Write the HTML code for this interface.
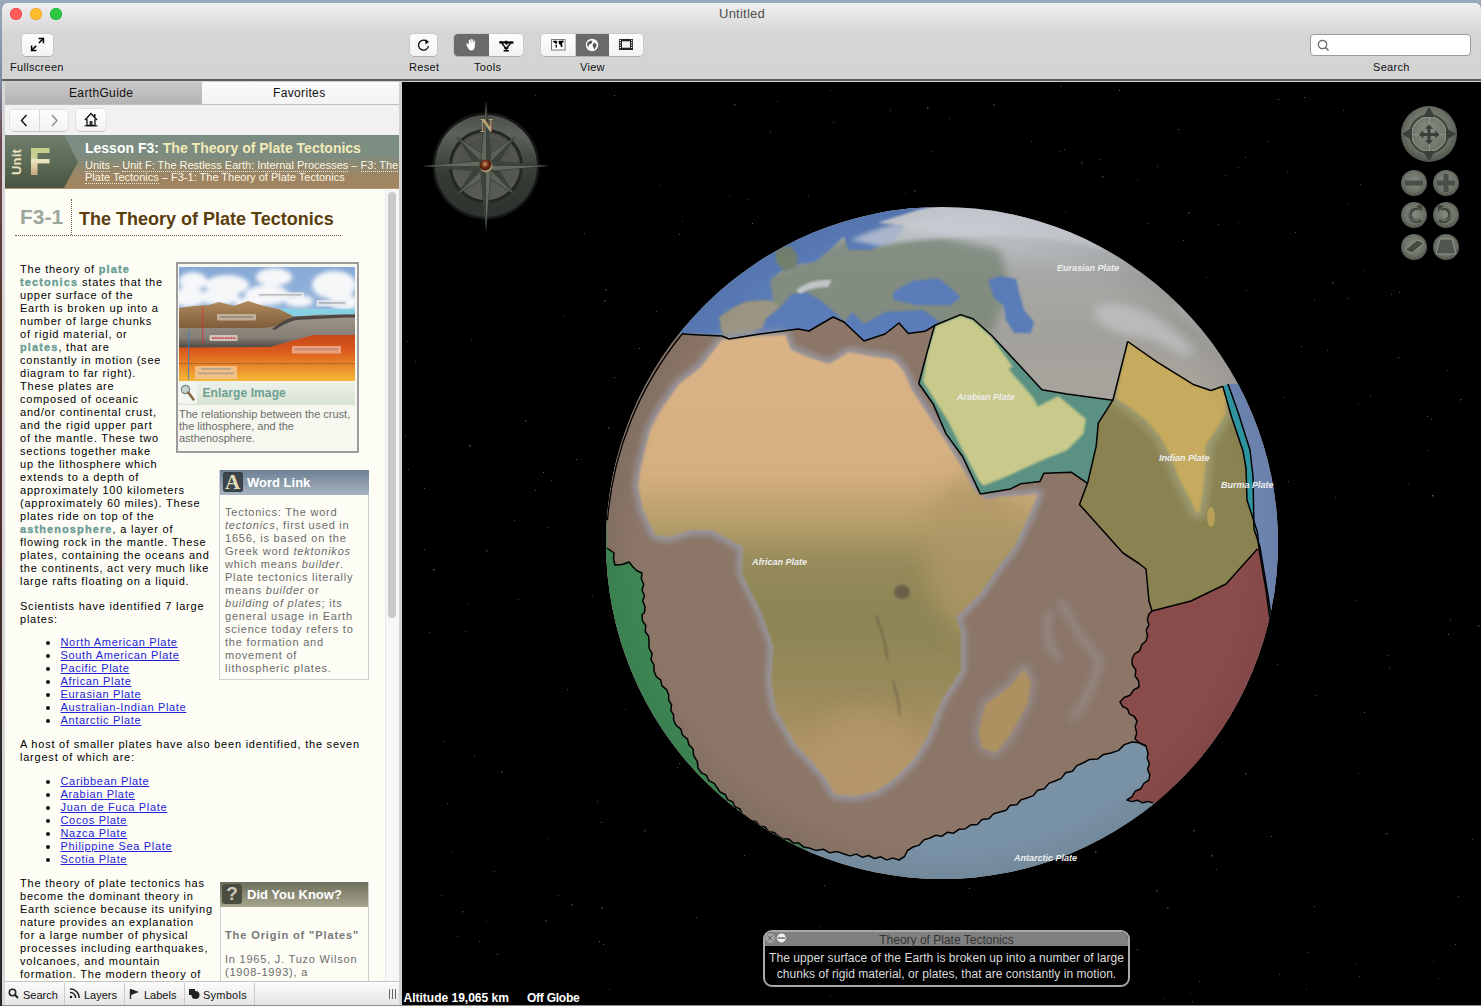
<!DOCTYPE html>
<html><head><meta charset="utf-8">
<style>
*{margin:0;padding:0;box-sizing:border-box}
html,body{width:1481px;height:1006px;overflow:hidden;background:#000;font-family:"Liberation Sans",sans-serif}
.a{position:absolute}
.light{width:12px;height:12px;border-radius:50%}
.btn{position:absolute;background:linear-gradient(180deg,#fdfdfd,#f3f3f3);border-radius:4px;box-shadow:0 0.5px 0.5px rgba(0,0,0,.25),0 0 0 0.5px rgba(0,0,0,.12)}
.lbl{position:absolute;font-size:11px;color:#111;white-space:nowrap;letter-spacing:0.3px;line-height:13px}
.t{position:absolute;white-space:nowrap;font-size:11px;line-height:13px;letter-spacing:0.78px;color:#000}
.b{font-weight:bold;color:#6a9d94;letter-spacing:1.1px;-webkit-text-stroke:0.35px #6a9d94}
.lk{color:#2323d6;text-decoration:underline;letter-spacing:0.66px}
.bul{position:absolute;width:4px;height:4px;border-radius:50%;background:#111}
</style></head>
<body>
<!-- desktop -->
<div class="a" style="left:0;top:0;width:1481px;height:1006px;background:#98a9bb"></div>
<div class="a" style="left:0;top:0;width:3px;height:1006px;background:linear-gradient(180deg,#98a9bb 0%,#7f8ca3 8%,#6a4a50 14%,#5e342e 30%,#4a2e2a 55%,#2e2a2a 75%,#262626 100%)"></div>
<!-- window bg -->
<div class="a" style="left:2px;top:3px;width:1479px;height:1003px;background:#000;border-radius:5px 5px 0 0;overflow:hidden">
  <div class="a" style="left:0;top:0;width:1479px;height:76px;background:linear-gradient(180deg,#eeeeee 0%,#e4e4e4 18%,#d6d6d6 40%,#d3d3d3 100%)"></div>
</div>
<div class="a" style="left:2px;top:79px;width:1479px;height:1.5px;background:#5c5c5c"></div>
<div class="a" style="left:2px;top:80.5px;width:1479px;height:1.5px;background:#cfcfcf"></div>

<!-- traffic lights -->
<div class="a light" style="left:10px;top:8px;background:#fc5b57;box-shadow:inset 0 0 0 0.5px #e2463f"></div>
<div class="a light" style="left:30px;top:8px;background:#fdbb2e;box-shadow:inset 0 0 0 0.5px #dfa023"></div>
<div class="a light" style="left:50px;top:8px;background:#2ac840;box-shadow:inset 0 0 0 0.5px #1fab2f"></div>
<div class="a" style="left:719px;top:6px;font-size:13px;line-height:16px;color:#4d4d4d;letter-spacing:0.25px">Untitled</div>

<!-- toolbar buttons -->
<div class="btn" style="left:22px;top:34px;width:31px;height:22px">
  <svg class="a" style="left:0;top:0" width="31" height="22" viewBox="0 0 31 22"><g stroke="#000" stroke-width="1.5" fill="none" stroke-linecap="square"><path d="M17.3 4.5 H21.4 V8.6"/><path d="M21 4.9 L17.4 8.5"/><path d="M9.6 12.3 V16.4 H13.7"/><path d="M10 16 L13.6 12.4"/></g></svg>
</div>
<div class="lbl" style="left:10px;top:61px">Fullscreen</div>

<div class="btn" style="left:410px;top:34px;width:27px;height:22px">
  <svg class="a" style="left:0;top:0" width="27" height="22" viewBox="0 0 27 22"><path d="M17.6 8.2 A5 5 0 1 0 18.5 12" stroke="#111" stroke-width="1.3" fill="none"/><path d="M15.2 5.2 L19 7.8 L15.6 10.4 Z" fill="#111"/></svg>
</div>
<div class="lbl" style="left:409px;top:61px">Reset</div>

<div class="btn" style="left:454px;top:34px;width:69px;height:22px;overflow:hidden">
  <div class="a" style="left:0;top:0;width:35px;height:22px;background:#6a6a6a"></div>
  <svg class="a" style="left:0;top:0" width="69" height="22" viewBox="0 0 69 22">
    <path d="M13.5 13 C12.5 11 12 9.5 12.8 9.2 C13.6 9 14 10.5 14.6 11 L14.8 6.5 C14.9 5.6 16 5.6 16.1 6.5 L16.3 10 L16.4 5.4 C16.5 4.6 17.6 4.6 17.7 5.4 L17.9 10 L18.2 5.8 C18.3 5 19.4 5 19.4 5.8 L19.5 10.4 L20.1 7.2 C20.3 6.5 21.3 6.6 21.2 7.4 L20.8 12.5 C20.5 15 19.5 16.5 17 16.5 C15.5 16.5 14.4 15 13.5 13 Z" fill="#fff"/>
    <path d="M45 7.5 Q47 6.5 50 7.5 L52 6.5 L54 7.5 Q57 6.8 59.5 7.5 V9.5 Q56 9.8 54 9.5 L52.5 11 L51 9.5 Q48 9.8 45.5 9.5 Z" fill="#000"/><path d="M48 9.5 L52 14.5 L56.5 9.5" stroke="#000" stroke-width="1.4" fill="none"/><path d="M50 17 L54.5 13.5 M50 13.5 L54.5 17 M49.5 17 H55" stroke="#000" stroke-width="1.2"/>
  </svg>
</div>
<div class="lbl" style="left:474px;top:61px">Tools</div>

<div class="btn" style="left:541px;top:34px;width:102px;height:22px;overflow:hidden">
  <div class="a" style="left:34px;top:0;width:34px;height:22px;background:#6a6a6a"></div>
  <div class="a" style="left:33.5px;top:0;width:0.5px;height:22px;background:#ccc"></div>
  <svg class="a" style="left:0;top:0" width="102" height="22" viewBox="0 0 102 22">
    <rect x="10.5" y="5.5" width="13.5" height="10.5" fill="#fff" stroke="#7a7a7a" stroke-width="1"/>
    <path d="M11.5 7 L15 6.5 L16.5 8 L15.5 10 L14.5 9.5 L13 8.5 Z M14.5 10.5 L16 11 L15.5 14.5 L14.5 13 Z M17.5 7 L22 6.5 L23 8 L21 9 L21.5 12.5 L20 13.5 L19.5 11 L18 10 Z" fill="#000"/>
    <circle cx="51" cy="11" r="6.2" fill="#fafafa"/>
    <path d="M49.5 6.5 L51.5 7 L50.5 9.5 L48 10.5 L47.5 13 L46 11.5 L46.5 8.5 Z M53 8.5 L55.5 10 L55 13 L53.5 15.5 L52.5 13.5 L51.5 11.5 Z" fill="#555"/>
    <rect x="78" y="5" width="14" height="11" fill="#222"/>
    <rect x="81" y="7.3" width="8" height="6.4" fill="#f2f2f2"/>
    <g fill="#fff"><rect x="78.7" y="5.8" width="1.3" height="1.1"/><rect x="78.7" y="8.2" width="1.3" height="1.1"/><rect x="78.7" y="10.6" width="1.3" height="1.1"/><rect x="78.7" y="13" width="1.3" height="1.1"/><rect x="90" y="5.8" width="1.3" height="1.1"/><rect x="90" y="8.2" width="1.3" height="1.1"/><rect x="90" y="10.6" width="1.3" height="1.1"/><rect x="90" y="13" width="1.3" height="1.1"/></g>
  </svg>
</div>
<div class="lbl" style="left:580px;top:61px">View</div>

<div class="a" style="left:1310px;top:34px;width:161px;height:22px;background:#fff;border:1px solid #9a9a9a;border-radius:4px"></div>
<svg class="a" style="left:1316px;top:38px" width="16" height="14" viewBox="0 0 16 14"><circle cx="6.5" cy="6.5" r="4.2" stroke="#666" stroke-width="1.2" fill="none"/><path d="M9.5 9.5 L12.5 12.5" stroke="#666" stroke-width="1.4"/></svg>
<div class="lbl" style="left:1373px;top:61px">Search</div>

<!-- LEFT PANEL -->
<div class="a" style="left:2px;top:82px;width:3px;height:923px;background:#d6d6d6"></div>
<div class="a" style="left:399px;top:82px;width:3px;height:923px;background:#d3d3d3"></div>
<!-- tabs -->
<div class="a" style="left:5px;top:82px;width:197px;height:22px;background:linear-gradient(180deg,#c9c9c9,#b3b3b3)"></div>
<div class="a" style="left:202px;top:82px;width:197px;height:22px;background:linear-gradient(180deg,#fafafa,#f3f3f3)"></div>
<div class="a" style="left:5px;top:104px;width:394px;height:1px;background:#bdbdbd"></div>
<div class="lbl" style="left:69px;top:86px;font-size:12px;line-height:14px;letter-spacing:0.35px">EarthGuide</div>
<div class="lbl" style="left:273px;top:86px;font-size:12px;line-height:14px;letter-spacing:0.35px">Favorites</div>
<!-- nav -->
<div class="a" style="left:5px;top:105px;width:394px;height:30px;background:#f1f1f1"></div>
<div class="btn" style="left:9.5px;top:109.5px;width:58.5px;height:21px">
  <div class="a" style="left:29px;top:0;width:0.7px;height:21px;background:#d8d8d8"></div>
  <svg class="a" style="left:0;top:0" width="59" height="21" viewBox="0 0 59 21"><path d="M16.5 5 L11.5 10.5 L16.5 16" stroke="#111" stroke-width="1.4" fill="none"/><path d="M42 5 L47 10.5 L42 16" stroke="#888" stroke-width="1.3" fill="none"/></svg>
</div>
<div class="btn" style="left:76px;top:109px;width:30px;height:22px">
  <svg class="a" style="left:0;top:0" width="30" height="22" viewBox="0 0 30 22"><path d="M9 11 L15 4.5 L21 11" stroke="#111" stroke-width="1.4" fill="none"/><path d="M11 10 V16.5 H19 V10" stroke="#111" stroke-width="1.3" fill="none"/><rect x="13.5" y="12" width="3" height="4.5" fill="#333"/><path d="M8.5 16.8 H21.5" stroke="#111" stroke-width="1"/><rect x="18" y="5" width="1.5" height="3" fill="#111"/></svg>
</div>
<!-- header -->
<div class="a" style="left:5px;top:135px;width:394px;height:54px;background:linear-gradient(180deg,#7b8e84 0%,#7d8c80 38%,#908870 58%,#a08562 80%,#a18561 100%)"></div>
<div class="a" style="left:5px;top:187.5px;width:394px;height:1.5px;background:#b39a74"></div>
<svg class="a" style="left:5px;top:135px" width="75" height="53" viewBox="0 0 75 53">
  <defs><linearGradient id="ug" x1="0" y1="0" x2="0" y2="1"><stop offset="0" stop-color="#6f7d6b"/><stop offset="0.55" stop-color="#5a6a55"/><stop offset="1" stop-color="#46533f"/></linearGradient></defs>
  <path d="M0 0 H59 L73 27 L59 53 H0 Z" fill="url(#ug)"/>
</svg>
<div class="a" style="left:-1px;top:155px;width:36px;height:14px;transform:rotate(-90deg);font-size:13px;font-weight:bold;color:#ece3bd;line-height:14px;text-align:center;letter-spacing:0.2px">Unit</div>
<svg class="a" style="left:31px;top:148px" width="19" height="28" viewBox="0 0 19 28">
  <defs><linearGradient id="fg" x1="0" y1="0" x2="0" y2="1"><stop offset="0" stop-color="#c6cf8c"/><stop offset="0.35" stop-color="#c9cd94"/><stop offset="0.45" stop-color="#efe7c2"/><stop offset="1" stop-color="#c4a77a"/></linearGradient></defs>
  <path d="M0 0 H18.5 V5 H6.5 V11 H18.5 V15.5 H6.5 V27 H0 Z" fill="url(#fg)"/>
</svg>
<div class="a" style="left:85px;top:140px;font-size:14px;line-height:16px;font-weight:bold;color:#fff;white-space:nowrap">Lesson F3: <span style="color:#f3eab8">The Theory of Plate Tectonics</span></div>
<div class="a" style="left:85px;top:159px;font-size:11px;line-height:12px;color:#fbf6e2;white-space:nowrap"><span style="border-bottom:1px dotted #f0e8d0">Units</span> – <span style="border-bottom:1px dotted #f0e8d0">Unit F: The Restless Earth: Internal Processes</span> – <span style="border-bottom:1px dotted #f0e8d0">F3: The</span></div>
<div class="a" style="left:85px;top:171px;font-size:11px;line-height:12px;color:#fbf6e2;white-space:nowrap"><span style="border-bottom:1px dotted #f0e8d0">Plate Tectonics</span> – F3-1: The Theory of Plate Tectonics</div>

<!-- content -->
<div class="a" style="left:5px;top:189px;width:379.5px;height:792.5px;background:#fdfdf6;overflow:hidden" id="content"><div class="a" style="left:-5px;top:-189px;width:1481px;height:1006px">
<div class="a" style="left:20px;top:205px;font-size:21px;line-height:24px;font-weight:bold;color:#9ba69d;white-space:nowrap">F3-1</div>
<div class="a" style="left:71px;top:199px;width:0;height:36px;border-left:1px dotted #6b5a3a"></div>
<div class="a" style="left:15px;top:235px;width:326px;height:0;border-top:1px dotted #6b5a3a"></div>
<div class="a" style="left:79px;top:208.5px;font-size:18px;line-height:21px;font-weight:bold;color:#5b3c0c;white-space:nowrap">The Theory of Plate Tectonics</div>

<!-- figure box -->
<div class="a" style="left:175.5px;top:261.5px;width:183px;height:191.5px;border:2px solid #9c9c9c;background:#f6f7ee"></div>
<svg class="a" style="left:179px;top:267px" width="176" height="114" viewBox="0 0 176 114">
  <defs>
    <linearGradient id="sky" x1="0" y1="0" x2="0" y2="1"><stop offset="0" stop-color="#86a9d6"/><stop offset="1" stop-color="#b9cde3"/></linearGradient>
    <linearGradient id="ast" x1="0" y1="0" x2="0" y2="1"><stop offset="0" stop-color="#c2461a"/><stop offset="0.35" stop-color="#d9581c"/><stop offset="0.7" stop-color="#e98a2a"/><stop offset="1" stop-color="#f4b839"/></linearGradient>
    <linearGradient id="crust" x1="0" y1="0" x2="0" y2="1"><stop offset="0" stop-color="#b08a5c"/><stop offset="1" stop-color="#7e5c3a"/></linearGradient>
    <linearGradient id="lith" x1="0" y1="0" x2="0" y2="1"><stop offset="0" stop-color="#9d978c"/><stop offset="0.7" stop-color="#847e74"/><stop offset="1" stop-color="#4e4944"/></linearGradient>
    <filter id="cb"><feGaussianBlur stdDeviation="2"/></filter>
  </defs>
  <rect width="176" height="114" fill="url(#sky)"/>
  <g fill="#f6f7f9" filter="url(#cb)">
    <ellipse cx="14" cy="14" rx="14" ry="9"/><ellipse cx="10" cy="30" rx="16" ry="10"/>
    <ellipse cx="48" cy="18" rx="22" ry="10"/><ellipse cx="40" cy="30" rx="20" ry="8"/>
    <ellipse cx="95" cy="10" rx="18" ry="9"/><ellipse cx="88" cy="28" rx="22" ry="10"/>
    <ellipse cx="155" cy="18" rx="22" ry="14"/><ellipse cx="165" cy="35" rx="14" ry="8"/>
    <ellipse cx="70" cy="36" rx="14" ry="6"/><ellipse cx="120" cy="34" rx="14" ry="6"/>
  </g>
  <rect y="66" width="176" height="48" fill="url(#ast)"/>
  <path d="M98 42 H176 V49 H98 Z" fill="#86d2e4"/>
  <path d="M0 41 L15 39 L30 38 L40 35 L55 39 L69 34 L85 39 L101 42.5 L113 48.6 L118 52 L95 61 L85 62 L0 62 Z" fill="url(#crust)"/>
  <path d="M0 61 L85 61 L95 59.5 L113 50 L140 47.5 L176 47.5 L176 68 L134 68 L91 80 L0 80.5 Z" fill="url(#lith)"/>
  <path d="M93 62 Q105 52 116 49.5 L165 47.5 L176 47.5 V50.5 L166 50.5 L117 53 Q106 56 96 63 Z" fill="#4f4842"/>
  <path d="M0 96.6 H176" stroke="#3a2a1a" stroke-width="0.6" stroke-dasharray="1.2 1.2"/>
  <rect x="78" y="25.5" width="47" height="5" rx="1" fill="#eef0f2" opacity="0.85"/>
  <rect x="137.5" y="33" width="31" height="6.5" rx="1" fill="#e6ebf0" opacity="0.85"/>
  <rect x="38" y="47" width="39" height="6.5" rx="1" fill="#c8b9a4" opacity="0.85"/>
  <rect x="30.5" y="68" width="28" height="6" rx="1" fill="#d8d0c8" opacity="0.85"/>
  <path d="M33 71 H57" stroke="#d03a3a" stroke-width="1.6" stroke-dasharray="2 0.6"/>
  <rect x="113" y="79" width="49" height="7.5" rx="1" fill="#f0b49a" opacity="0.8"/>
  <rect x="16" y="99" width="42" height="13" rx="1" fill="#f3c493" opacity="0.85"/>
  <path d="M23.7 40 V77" stroke="#d32f2f" stroke-width="0.8"/>
  <path d="M9.7 63 V113" stroke="#3a7fc0" stroke-width="0.9"/>
  <g fill="#333" opacity="0.55"><rect x="80" y="27" width="43" height="1.6" opacity="0.5"/><rect x="140" y="35" width="26" height="1.8" opacity="0.5"/><rect x="41" y="49.2" width="33" height="1.8" opacity="0.5"/><rect x="116" y="81.5" width="43" height="1.8" opacity="0.45"/><rect x="22" y="101" width="30" height="1.8" fill="#3a6aa8" opacity="0.6"/><rect x="19" y="105.5" width="36" height="1.8" fill="#3a6aa8" opacity="0.6"/></g>
</svg>
<div class="a" style="left:179px;top:381px;width:176px;height:24px;background:linear-gradient(180deg,#eef2ea,#d6e3d2)"></div>
<div class="a" style="left:179px;top:382px;width:18px;height:22px;background:#f3f6f0;border-radius:3px"></div>
<svg class="a" style="left:179px;top:383px" width="18" height="20" viewBox="0 0 18 20"><circle cx="6.5" cy="6.5" r="4.2" fill="#c9d4d2" stroke="#7a8c88" stroke-width="1.2"/><path d="M9.3 9.5 L14.5 16.5" stroke="#8a6a40" stroke-width="2.6" stroke-linecap="round"/></svg>
<div class="a" style="left:202.5px;top:386px;font-size:12px;line-height:14px;font-weight:bold;color:#6e9f95;white-space:nowrap;letter-spacing:0.1px">Enlarge Image</div>
<div class="a" style="left:179px;top:408px;font-size:11px;line-height:12px;color:#6d6d6d;white-space:nowrap">The relationship between the crust,<br>the lithosphere, and the<br>asthenosphere.</div>

<!-- word link -->
<div class="a" style="left:219px;top:469.5px;width:150px;height:210px;border:1px solid #cfcfcf"></div>
<div class="a" style="left:219.5px;top:470px;width:149px;height:25px;background:linear-gradient(180deg,#6e7f94,#a7b4c1)"></div>
<div class="a" style="left:222.5px;top:472px;width:20px;height:20px;background:#3b474d;border-radius:3px;box-shadow:inset 0 0 2px rgba(0,0,0,.5)"></div>
<div class="a" style="left:222.5px;top:471px;width:20px;height:20px;font-family:'Liberation Serif',serif;font-size:21px;line-height:22px;font-weight:bold;color:#e6dcb8;text-align:center">A</div>
<div class="a" style="left:247px;top:474.5px;font-size:13px;line-height:15px;font-weight:bold;color:#fff;white-space:nowrap">Word Link</div>

<!-- did you know -->
<div class="a" style="left:219.5px;top:881.5px;width:149px;height:200px;border:1px solid #cfcfcf"></div>
<div class="a" style="left:220px;top:882px;width:148px;height:25px;background:linear-gradient(180deg,#6d6e5a,#a6a58e)"></div>
<div class="a" style="left:222px;top:884px;width:20px;height:20px;background:#4b4c40;border-radius:3px"></div>
<div class="a" style="left:222px;top:883px;width:20px;height:20px;font-size:19px;line-height:22px;font-weight:bold;color:#c9c8b8;text-align:center">?</div>
<div class="a" style="left:247px;top:886.5px;font-size:13px;line-height:15px;font-weight:bold;color:#fff;white-space:nowrap">Did You Know?</div>

<div class="t" style="left:20px;top:263.3px;">The theory of <span class="b">plate</span></div>
<div class="t" style="left:20px;top:276.3px;"><span class="b">tectonics</span> states that the</div>
<div class="t" style="left:20px;top:289.3px;">upper surface of the</div>
<div class="t" style="left:20px;top:302.3px;">Earth is broken up into a</div>
<div class="t" style="left:20px;top:315.3px;">number of large chunks</div>
<div class="t" style="left:20px;top:328.3px;">of rigid material, or</div>
<div class="t" style="left:20px;top:341.3px;"><span class="b">plates</span>, that are</div>
<div class="t" style="left:20px;top:354.3px;">constantly in motion (see</div>
<div class="t" style="left:20px;top:367.3px;">diagram to far right).</div>
<div class="t" style="left:20px;top:380.3px;">These plates are</div>
<div class="t" style="left:20px;top:393.3px;">composed of oceanic</div>
<div class="t" style="left:20px;top:406.3px;">and/or continental crust,</div>
<div class="t" style="left:20px;top:419.3px;">and the rigid upper part</div>
<div class="t" style="left:20px;top:432.3px;">of the mantle. These two</div>
<div class="t" style="left:20px;top:445.3px;">sections together make</div>
<div class="t" style="left:20px;top:458.3px;">up the lithosphere which</div>
<div class="t" style="left:20px;top:471.3px;">extends to a depth of</div>
<div class="t" style="left:20px;top:484.3px;">approximately 100 kilometers</div>
<div class="t" style="left:20px;top:497.3px;">(approximately 60 miles). These</div>
<div class="t" style="left:20px;top:510.3px;">plates ride on top of the</div>
<div class="t" style="left:20px;top:523.3px;"><span class="b">asthenosphere</span>, a layer of</div>
<div class="t" style="left:20px;top:536.3px;">flowing rock in the mantle. These</div>
<div class="t" style="left:20px;top:549.3px;">plates, containing the oceans and</div>
<div class="t" style="left:20px;top:562.3px;">the continents, act very much like</div>
<div class="t" style="left:20px;top:575.3px;">large rafts floating on a liquid.</div>
<div class="t" style="left:20px;top:599.7px;">Scientists have identified 7 large</div>
<div class="t" style="left:20px;top:612.7px;">plates:</div>
<div class="bul" style="left:46px;top:641.0px"></div>
<div class="t" style="left:60.5px;top:636.2px;"><span class="lk">North American Plate</span></div>
<div class="bul" style="left:46px;top:654.0px"></div>
<div class="t" style="left:60.5px;top:649.2px;"><span class="lk">South American Plate</span></div>
<div class="bul" style="left:46px;top:667.0px"></div>
<div class="t" style="left:60.5px;top:662.2px;"><span class="lk">Pacific Plate</span></div>
<div class="bul" style="left:46px;top:680.0px"></div>
<div class="t" style="left:60.5px;top:675.2px;"><span class="lk">African Plate</span></div>
<div class="bul" style="left:46px;top:693.0px"></div>
<div class="t" style="left:60.5px;top:688.2px;"><span class="lk">Eurasian Plate</span></div>
<div class="bul" style="left:46px;top:706.0px"></div>
<div class="t" style="left:60.5px;top:701.2px;"><span class="lk">Australian-Indian Plate</span></div>
<div class="bul" style="left:46px;top:719.0px"></div>
<div class="t" style="left:60.5px;top:714.2px;"><span class="lk">Antarctic Plate</span></div>
<div class="t" style="left:20px;top:738.2px;">A host of smaller plates have also been identified, the seven</div>
<div class="t" style="left:20px;top:751.2px;">largest of which are:</div>
<div class="bul" style="left:46px;top:780.0px"></div>
<div class="t" style="left:60.5px;top:775.2px;"><span class="lk">Caribbean Plate</span></div>
<div class="bul" style="left:46px;top:793.0px"></div>
<div class="t" style="left:60.5px;top:788.2px;"><span class="lk">Arabian Plate</span></div>
<div class="bul" style="left:46px;top:806.0px"></div>
<div class="t" style="left:60.5px;top:801.2px;"><span class="lk">Juan de Fuca Plate</span></div>
<div class="bul" style="left:46px;top:819.0px"></div>
<div class="t" style="left:60.5px;top:814.2px;"><span class="lk">Cocos Plate</span></div>
<div class="bul" style="left:46px;top:832.0px"></div>
<div class="t" style="left:60.5px;top:827.2px;"><span class="lk">Nazca Plate</span></div>
<div class="bul" style="left:46px;top:845.0px"></div>
<div class="t" style="left:60.5px;top:840.2px;"><span class="lk">Philippine Sea Plate</span></div>
<div class="bul" style="left:46px;top:858.0px"></div>
<div class="t" style="left:60.5px;top:853.2px;"><span class="lk">Scotia Plate</span></div>
<div class="t" style="left:20px;top:877.2px;">The theory of plate tectonics has</div>
<div class="t" style="left:20px;top:890.2px;">become the dominant theory in</div>
<div class="t" style="left:20px;top:903.2px;">Earth science because its unifying</div>
<div class="t" style="left:20px;top:916.2px;">nature provides an explanation</div>
<div class="t" style="left:20px;top:929.2px;">for a large number of physical</div>
<div class="t" style="left:20px;top:942.2px;">processes including earthquakes,</div>
<div class="t" style="left:20px;top:955.2px;">volcanoes, and mountain</div>
<div class="t" style="left:20px;top:968.2px;">formation. The modern theory of</div>
<div class="t" style="left:20px;top:981.2px;">plate tectonics</div>
<div class="t" style="left:225px;top:505.7px;color:#6b6b6b">Tectonics: The word</div>
<div class="t" style="left:225px;top:518.7px;color:#6b6b6b"><i>tectonics</i>, first used in</div>
<div class="t" style="left:225px;top:531.7px;color:#6b6b6b">1656, is based on the</div>
<div class="t" style="left:225px;top:544.7px;color:#6b6b6b">Greek word <i>tektonikos</i></div>
<div class="t" style="left:225px;top:557.7px;color:#6b6b6b">which means <i>builder</i>.</div>
<div class="t" style="left:225px;top:570.7px;color:#6b6b6b">Plate tectonics literally</div>
<div class="t" style="left:225px;top:583.7px;color:#6b6b6b">means <i>builder</i> or</div>
<div class="t" style="left:225px;top:596.7px;color:#6b6b6b"><i>building of plates</i>; its</div>
<div class="t" style="left:225px;top:609.7px;color:#6b6b6b">general usage in Earth</div>
<div class="t" style="left:225px;top:622.7px;color:#6b6b6b">science today refers to</div>
<div class="t" style="left:225px;top:635.7px;color:#6b6b6b">the formation and</div>
<div class="t" style="left:225px;top:648.7px;color:#6b6b6b">movement of</div>
<div class="t" style="left:225px;top:661.7px;color:#6b6b6b">lithospheric plates.</div>
<div class="t" style="left:225px;top:929.3px;color:#777;font-weight:bold;letter-spacing:0.9px">The Origin of "Plates"</div>
<div class="t" style="left:225px;top:953.3px;color:#6b6b6b">In 1965, J. Tuzo Wilson</div>
<div class="t" style="left:225px;top:966.3px;color:#6b6b6b">(1908-1993), a</div>
</div></div>
<div class="a" style="left:384.5px;top:189px;width:14.5px;height:792.5px;background:#f7f7f8;border-left:1px solid #e8e8e8"></div>
<div class="a" style="left:388px;top:192px;width:8px;height:426px;background:#c9c9c9;border-radius:4px"></div>

<!-- bottom bar -->
<div class="a" style="left:5px;top:981px;width:394px;height:1px;background:#c4c4c4"></div>
<div class="a" style="left:5px;top:982px;width:394px;height:23px;background:linear-gradient(180deg,#fbfbfb,#e6e6e6)"></div>
<div class="a" style="left:2px;top:1005px;width:1479px;height:1px;background:#8a8a8a"></div>

<!-- GLOBE VIEW -->
<div class="a" style="left:402px;top:82px;width:1079px;height:923px;background:#000"></div>
<!--GLOBE-->
<svg class="a" style="left:402px;top:82px" width="1078" height="923" viewBox="402 82 1078 923">
<defs>
  <clipPath id="gc"><circle cx="942" cy="543" r="336"/></clipPath>
  <radialGradient id="limb" cx="942" cy="543" r="336" gradientUnits="userSpaceOnUse">
    <stop offset="0" stop-color="#000" stop-opacity="0"/>
    <stop offset="0.9" stop-color="#000" stop-opacity="0"/>
    <stop offset="1" stop-color="#000" stop-opacity="0.06"/>
  </radialGradient>
  <linearGradient id="afr" x1="0" y1="335" x2="0" y2="795" gradientUnits="userSpaceOnUse">
    <stop offset="0" stop-color="#dab486"/>
    <stop offset="0.3" stop-color="#d5af80"/>
    <stop offset="0.4" stop-color="#b8a06c"/>
    <stop offset="0.5" stop-color="#958a5a"/>
    <stop offset="0.62" stop-color="#8c8555"/>
    <stop offset="0.78" stop-color="#9a8b5b"/>
    <stop offset="0.9" stop-color="#b09468"/>
    <stop offset="1" stop-color="#b5966a"/>
  </linearGradient>
  <linearGradient id="eur" x1="0" y1="207" x2="0" y2="420" gradientUnits="userSpaceOnUse">
    <stop offset="0" stop-color="#cdd1d8"/>
    <stop offset="0.14" stop-color="#bcc0c4"/>
    <stop offset="0.32" stop-color="#a6a8a6"/>
    <stop offset="0.6" stop-color="#a3a19b"/>
    <stop offset="1" stop-color="#a8a59e"/>
  </linearGradient>
  <clipPath id="indclip"><path d="M1127.7 341.5 L1156.5 361.7 L1194 384.8 L1211 390.5 L1222.8 386.2 L1231.4 416.5 L1243 451 L1246 468 L1247 500 L1257.4 532 L1259 549 L1257.4 549 L1226 584 L1191 601 L1152 611 L1149 601 L1146 569 L1139 563.5 L1123 553 L1079.5 504.5 L1087.9 482 L1096.2 446.1 L1098.3 423.1 L1112.9 400.2 Z"/></clipPath>
  <clipPath id="afclip"><path d="M722 339.7 L760 336 L785.6 334.9 L790.5 349.5 L810 358 L829.5 364 L849 352 L870 356 L892.8 359.2 L898 364 L904 372 L912 390 L925 410 L950 448 L963 469 L974 490 L986 500 L1000 497 L1038 494 L1027 520 L1013 548 L1000 564 L980.4 593 L956 617.4 L961 632 L961 671 L941.5 700.2 L927 738 L913 760 L896 777 L876 791 L855 796 L835 794 L825 777 L808 757 L796 745 L775.9 710 L771 680.7 L773.4 646.6 L761.3 612.5 L741.8 573.5 L743 547 L712 530 L691 530 L669 537 L655 535 L643 509 L638 487 L640.6 468 L650 430 L660 411 L679 384 L700 368 Z"/></clipPath>
  <filter id="bl" x="-5%" y="-5%" width="110%" height="110%"><feGaussianBlur stdDeviation="1"/></filter>
  <filter id="bl2" x="-10%" y="-10%" width="120%" height="120%"><feGaussianBlur stdDeviation="2"/></filter>
  <filter id="bl12" x="-50%" y="-50%" width="200%" height="200%"><feGaussianBlur stdDeviation="12"/></filter>
  <filter id="bl3" x="-10%" y="-10%" width="120%" height="120%"><feGaussianBlur stdDeviation="3"/></filter>
  <filter id="bl4" x="-20%" y="-20%" width="140%" height="140%"><feGaussianBlur stdDeviation="4"/></filter>
</defs>
<g clip-path="url(#gc)">
  <rect x="600" y="200" width="690" height="690" fill="url(#eur)"/>
  <path d="M700 345 L720 300 L760 280 L800 262 L840 240 L880 228 L940 236 L1000 250 L1010 290 L990 335 L940 340 Z" fill="#7b887a" filter="url(#bl4)" opacity="0.85"/>
  <path d="M721 331 L719 317 L731 308.5 L745 301.4 L763 299.7 L773 301.4 L780.5 306.7 L766 319 L763 328 L749 333 L728 335 Z" fill="#9b9583" filter="url(#bl)"/>
  <g fill="#5a7cb8" filter="url(#bl)">
    <path d="M600 200 L960 200 L918 210 L880 222 L842 238 L831 248.6 L815 262 L798 264.6 L780.5 271.6 L770 280 L773 301 L763 299.7 L745 301.4 L731 308.5 L719 317 L721 331 L723 335 L683 334 L600 340 Z"/>
    <path d="M728 337 L749 334 L763 328 L766 319 L780.5 307 L791 294.4 L806 292 L820 300 L838 315 L845 322 L852 312 L864 324 L885 312 L923 310 L940 322 L936 346 L860 345 L800 342 Z"/>
    <path d="M842 228 L870 222 L905 226 L895 240 L870 250 L848 250 Z"/>
    <path d="M893.4 291.8 L912.3 281 L939.3 278.3 L961 297.2 L950 305.3 L917.7 305.3 L893.4 300 Z"/>
    <path d="M988 280 L1000 276 L1016 279 L1020 296 L1024 310 L1034 322 L1031 333 L1014 333 L1006 320 L1004 306 L994 298 Z"/>
  </g>
  <path d="M776 249 L790 246 L798 256 L796 268 L784 271 L776 262 Z" fill="#74846f" filter="url(#bl)"/>
  <path d="M850 240 Q920 208 1010 212 Q1120 220 1215 270 L1235 300 Q1150 250 1040 238 Q950 232 880 246 Z" fill="#d0d3da" filter="url(#bl2)" opacity="0.7"/>
  <path d="M1095 305 Q1130 300 1160 320 Q1185 335 1195 352 L1185 356 Q1150 335 1125 335 Q1105 330 1095 318 Z" fill="#c8cbd0" filter="url(#bl4)" opacity="0.6"/>
  <path d="M1180 300 Q1230 330 1255 380 L1245 385 Q1220 340 1175 310 Z" fill="#c0c2c4" filter="url(#bl4)" opacity="0.5"/>
  <path d="M796 290 Q812 278 832 280 L828 287 Q812 287 800 294 Z" fill="#cfd4da" filter="url(#bl)" opacity="0.8"/>

  <path d="M600 336 L683 334 L700 335 L722 336 L729 339 L760 334 L798 329 L809 331 L833 317 L844 322 L864 341 L885 334 L899 323 L908.3 333.4 L925 331.3 L935.5 325 L934.4 326 L927.1 352.2 L918.8 383.5 L933.4 404.4 L945.9 433.6 L962.6 456.5 L980.4 494.1 L1010.6 488.9 L1021 483.7 L1039.8 481.6 L1044 473.2 L1071.2 472.2 L1087.9 483.7 L1079.5 504.5 L1123 553 L1139 563.5 L1146 569 L1149 601 L1152 611 L1149 614 L1146 641 L1132 659 L1139 687 L1120 702 L1137 721 L1135 739 L1146 746 L1132 742 L1111 753 L1083 763 L1055 781 L1027 798 L1000 812 L965 829 L930 838 L913 847 L899 860 L844 854 L809 848 L600 848 Z" fill="#8b7668"/>
  <path d="M722 339.7 L760 336 L785.6 334.9 L790.5 349.5 L810 358 L829.5 364 L849 352 L870 356 L892.8 359.2 L898 364 L904 372 L912 390 L925 410 L950 448 L963 469 L974 490 L986 500 L1000 497 L1038 494 L1027 520 L1013 548 L1000 564 L980.4 593 L956 617.4 L961 632 L961 671 L941.5 700.2 L927 738 L913 760 L896 777 L876 791 L855 796 L835 794 L825 777 L808 757 L796 745 L775.9 710 L771 680.7 L773.4 646.6 L761.3 612.5 L741.8 573.5 L743 547 L712 530 L691 530 L669 537 L655 535 L643 509 L638 487 L640.6 468 L650 430 L660 411 L679 384 L700 368 Z" fill="none" stroke="#9c9ca8" stroke-width="10" stroke-linejoin="round" filter="url(#bl3)" opacity="0.85"/>
  <path d="M722 339.7 L760 336 L785.6 334.9 L790.5 349.5 L810 358 L829.5 364 L849 352 L870 356 L892.8 359.2 L898 364 L904 372 L912 390 L925 410 L950 448 L963 469 L974 490 L986 500 L1000 497 L1038 494 L1027 520 L1013 548 L1000 564 L980.4 593 L956 617.4 L961 632 L961 671 L941.5 700.2 L927 738 L913 760 L896 777 L876 791 L855 796 L835 794 L825 777 L808 757 L796 745 L775.9 710 L771 680.7 L773.4 646.6 L761.3 612.5 L741.8 573.5 L743 547 L712 530 L691 530 L669 537 L655 535 L643 509 L638 487 L640.6 468 L650 430 L660 411 L679 384 L700 368 Z" fill="url(#afr)" filter="url(#bl)"/>
  <g clip-path="url(#afclip)"><ellipse cx="975" cy="555" rx="50" ry="80" fill="#b09868" filter="url(#bl12)" opacity="0.75"/><ellipse cx="865" cy="755" rx="50" ry="45" fill="#b6986a" filter="url(#bl12)" opacity="0.7"/></g>
  <ellipse cx="902" cy="592" rx="8" ry="7" fill="#6a5e48" filter="url(#bl)"/>
  <path d="M876 615 L884 640 L888 660" stroke="#6a5e48" stroke-width="2" fill="none" filter="url(#bl)" opacity="0.7"/>
  <path d="M893 680 L898 700 L900 715" stroke="#6a5e48" stroke-width="1.8" fill="none" filter="url(#bl)" opacity="0.7"/>
  <path d="M1060 600 Q1080 640 1100 660 Q1090 700 1070 720 M1050 610 Q1040 640 1060 660" stroke="#a09ea6" stroke-width="6" fill="none" filter="url(#bl4)" opacity="0.6"/>
  <path d="M1024 669 L1031 683 L1027.4 704 L1010 735.3 L996 752.7 L982.2 747.5 L978.7 731.8 L985.7 704 L1010 686.6 Z" fill="none" stroke="#9b9aa3" stroke-width="8" filter="url(#bl4)" opacity="0.7"/>
  <path d="M1024 669 L1031 683 L1027.4 704 L1010 735.3 L996 752.7 L982.2 747.5 L978.7 731.8 L985.7 704 L1010 686.6 Z" fill="#ad9160" filter="url(#bl)"/>

  <path d="M935.5 325 L960.5 314.6 L973 318.8 L991.8 335.5 L1016.9 362.6 L1041.9 389.8 L1067 394 L1112.9 400.2 L1098.3 423.1 L1096.2 446.1 L1087.9 482 L1087.9 483.7 L1071.2 472.2 L1044 473.2 L1039.8 481.6 L1021 483.7 L1010.6 488.9 L980.4 494.1 L980.4 494.1 L962.6 456.5 L945.9 433.6 L933.4 404.4 L918.8 383.5 L927.1 352.2 L934.4 326 Z" fill="#5b9183"/>
  <path d="M935.5 326 L960.5 316 L973 320 L991.8 337 L1012.7 366.8 L1008.5 368.9 L1033.6 398 L1037.8 406.5 L1058.6 396 L1060.7 398 L1085.8 419 L1083.7 433.6 L1067 450.3 L1046 458.6 L1004.4 477.4 L983.5 485.8 L979.3 481.6 L962.6 450.3 L948 421 L923 381.4 L927 354.3 Z" fill="#c8c98a" filter="url(#bl)"/>
  <path d="M1127.7 341.5 L1156.5 361.7 L1194 384.8 L1211 390.5 L1222.8 386.2 L1231.4 416.5 L1243 451 L1246 468 L1247 500 L1257.4 532 L1259 549 L1257.4 549 L1226 584 L1191 601 L1152 611 L1149 601 L1146 569 L1139 563.5 L1123 553 L1079.5 504.5 L1087.9 482 L1096.2 446.1 L1098.3 423.1 L1112.9 400.2 Z" fill="#8a8351"/>
  <g clip-path="url(#indclip)"><path d="M1127.7 341.5 L1156.5 361.7 L1194 384.8 L1211 390.5 L1222.8 386.2 L1226 400 L1225.7 413.6 L1217 428 L1205.5 445.3 L1205.5 465.5 L1202.6 491.4 L1199.7 511.6 L1196.9 513 L1192 503 L1180 480 L1170 455 L1160 436 L1146 420 L1128 406 L1116 398 Z" fill="none" stroke="#a09e76" stroke-width="14" stroke-linejoin="round" filter="url(#bl3)" opacity="0.8"/></g>
  <path d="M1127.7 341.5 L1156.5 361.7 L1194 384.8 L1211 390.5 L1222.8 386.2 L1226 400 L1225.7 413.6 L1217 428 L1205.5 445.3 L1205.5 465.5 L1202.6 491.4 L1199.7 511.6 L1196.9 513 L1192 503 L1180 480 L1170 455 L1160 436 L1146 420 L1128 406 L1116 398 Z" fill="#c6aa5d" filter="url(#bl)"/>
  <ellipse cx="1211" cy="517" rx="4" ry="10" fill="#b8a058"/>
  <path d="M1222.8 386.2 L1231.4 416.5 L1243 451 L1246 468 L1247 500 L1257.4 532 L1259 549 L1266 590 L1270 620 L1272 650 L1276 660 L1274 640 L1268.6 599 L1260 547 L1254 529 L1253 476 L1250 450 L1238 412 L1228 384 Z" fill="#2e98a2"/>
  <path d="M1228 384 L1238 412 L1250 450 L1253 476 L1254 529 L1260 547 L1268.6 599 L1274 640 L1276 660 L1300 660 L1300 380 Z" fill="#7088b6"/>
  <path d="M1152 611 L1191 601 L1226 584 L1257.4 549 L1259 549 L1266 590 L1270 620 L1272 650 L1300 650 L1300 900 L1153 803 L1127 800 L1149 780 L1148 753 L1146 746 L1135 739 L1137 721 L1120 702 L1139 687 L1132 659 L1146 641 L1149 614 L1152 611 Z" fill="#8a4c4b"/>
  <path d="M600 848 L809 848 L844 854 L899 860 L913 847 L930 838 L965 829 L1000 812 L1027 798 L1055 781 L1083 763 L1111 753 L1132 742 L1146 746 L1148 753 L1149 780 L1127 800 L1153 803 L1300 900 L600 900 Z" fill="#7a92a6"/>
  <path d="M600 500 L607 519 L607 548 L614 553 L615 565 L629 562 L633 567 L642 573 L644.4 612.5 L642 615 L649 642 L654 671 L668.7 695 L673.6 720 L693 749 L698 768 L717.4 788 L746.6 817 L778 836 L809 848 L600 900 Z" fill="#3e8855"/>
  <g fill="none" stroke="#000" stroke-width="1.5" stroke-linejoin="round">
    <path d="M683 334 L700 335 L722 336 L729 339 L760 334 L798 329 L809 331 L833 317 L844 322 L864 341 L885 334 L899 323 L908.3 333.4 L925 331.3 L935.5 325 L935.5 325 L960.5 314.6 L973 318.8 L991.8 335.5 L1016.9 362.6 L1041.9 389.8 L1067 394 L1112.9 400.2"/>
    <path d="M1127.7 341.5 L1156.5 361.7 L1194 384.8 L1211 390.5 L1222.8 386.2"/>
    <path d="M1127.7 341.5 L1112.9 400.2 L1098.3 423.1 L1096.2 446.1 L1087.9 482 L1079.5 504.5 L1123 553 L1139 563.5 L1146 569 L1149 601 L1152 611"/>
    <path d="M1152 611 L1191 601 L1226 584 L1257.4 549"/>
    <path d="M935.5 325 L934.4 326 L927.1 352.2 L918.8 383.5 L933.4 404.4 L945.9 433.6 L962.6 456.5 L980.4 494.1"/>
    <path d="M980.4 494.1 L1010.6 488.9 L1021 483.7 L1039.8 481.6 L1044 473.2 L1071.2 472.2 L1087.9 483.7"/>
    <path d="M1152 611 L1149 614 L1147.4 619.3 L1148.8 624.9 L1146.2 630.1 L1147.6 635.7 L1146 641 L1141.7 644.9 L1139.8 650.6 L1134.7 653.9 L1132 659 L1132.4 664.8 L1135.8 670.0 L1135.2 676.0 L1138.6 681.2 L1139 687 L1133.6 690.0 L1130.1 695.3 L1124.1 697.5 L1120 702 L1122.7 706.5 L1127.5 708.9 L1129.5 714.1 L1134.3 716.5 L1137 721 L1135.3 726.9 L1136.7 733.1 L1135 739 L1140.0 743.3 L1146 746 L1148 753 L1147.2 758.4 L1149.4 763.8 L1147.6 769.2 L1149.8 774.6 L1149 780 L1143.9 783.3 L1140.9 788.7 L1135.1 791.3 L1132.1 796.7 L1127 800 L1132.1 801.6 L1137.5 800.2 L1142.5 802.8 L1147.9 801.4 L1153 803"/>
    <path d="M1146 746 L1139.3 742.8 L1132 742 L1124.4 744.6 L1118.6 750.4 L1111 753 L1103.6 754.4 L1097.4 759.1 L1089.6 759.4 L1083 763 L1076.8 765.6 L1072.4 771.2 L1065.6 772.8 L1061.2 778.4 L1055 781 L1048.8 783.4 L1044.4 788.8 L1037.6 790.2 L1033.2 795.6 L1027 798 L1021.0 799.7 L1016.8 804.7 L1010.2 805.3 L1006.0 810.3 L1000 812 L993.6 813.8 L988.9 818.7 L982.0 819.4 L977.2 824.4 L970.3 825.1 L965 829 L958.9 829.3 L953.6 833.2 L947.2 832.3 L942.0 836.2 L935.5 835.3 L930 838 L923.8 839.9 L919.2 845.1 L913 847 L907.5 850.5 L904.5 856.5 L899 860 L893.0 858.1 L886.6 859.9 L880.8 856.8 L874.4 858.5 L868.6 855.5 L862.2 857.2 L856.4 854.1 L850.0 855.9 L844 854 L837.2 851.6 L829.8 852.8 L823.2 849.2 L815.8 850.4 L809 848"/>
    <path d="M607 548 L614 553 L613.5 559.1 L615 565 L622.2 564.5 L629 562 L633 567 L636.9 570.8 L642 573 L641.3 578.7 L643.7 584.2 L642.0 590.0 L644.4 595.5 L642.7 601.3 L645.1 606.8 L644.4 612.5 L642 615 L642.4 620.7 L645.8 625.5 L645.2 631.5 L648.6 636.3 L649 642 L649.0 648.0 L652.0 653.4 L651.0 659.6 L654.0 665.0 L654 671 L656.1 676.3 L660.7 680.1 L662.0 685.9 L666.6 689.7 L668.7 695 L668.7 700.2 L671.6 704.8 L670.7 710.2 L673.6 714.8 L673.6 720 L676.0 725.4 L680.9 729.1 L682.5 735.1 L687.4 738.8 L688.9 744.7 L693 749 L693.7 755.6 L697.3 761.4 L698 768 L701.2 772.7 L706.5 775.3 L708.9 780.7 L714.2 783.3 L717.4 788 L720.3 792.3 L725.4 794.5 L727.6 799.6 L732.7 801.8 L734.9 806.8 L740.0 809.0 L742.2 814.1 L746.6 817 L750.6 820.6 L756.1 821.6 L759.5 826.0 L765.1 827.0 L768.5 831.4 L774.0 832.4 L778 836 L782.8 838.9 L788.7 839.1 L793.1 842.9 L799.0 843.1 L803.5 846.9 L809 848"/>
    <path d="M1222.8 386.2 L1231.4 416.5 L1243 451 L1246 468 L1247 500 L1257.4 532 L1259 549 L1266 590 L1270 620 L1272 650"/>
    <path d="M1228 384 L1238 412 L1250 450 L1253 476 L1254 529 L1260 547 L1268.6 599 L1274 640 L1276 660"/>
    <path d="M683 333 A336 336 0 0 0 607.5 520" stroke-width="1.3"/>
  </g>
  <circle cx="942" cy="543" r="336" fill="url(#limb)"/>
</g>
<g font-family="Liberation Sans" font-weight="bold" font-style="italic" font-size="9" fill="#eeeeee">
  <text x="1057" y="271">Eurasian Plate</text>
  <text x="957" y="400">Arabian Plate</text>
  <text x="1159" y="461">Indian Plate</text>
  <text x="1221" y="488">Burma Plate</text>
  <text x="752" y="565">African Plate</text>
  <text x="1014" y="861">Antarctic Plate</text>
</g>
</svg>
<!--/GLOBE-->
<!--OVERLAY-->
<!-- compass -->
<svg class="a" style="left:420px;top:98px" width="132" height="136" viewBox="420 98 132 136">
  <defs>
    <linearGradient id="cring" x1="0" y1="112" x2="0" y2="220" gradientUnits="userSpaceOnUse"><stop offset="0" stop-color="#474b46"/><stop offset="0.2" stop-color="#5e625c"/><stop offset="0.42" stop-color="#454a44"/><stop offset="0.6" stop-color="#353a35"/><stop offset="1" stop-color="#2e322e"/></linearGradient>
    <linearGradient id="cin" x1="0" y1="130" x2="0" y2="200" gradientUnits="userSpaceOnUse"><stop offset="0" stop-color="#4a4d47"/><stop offset="1" stop-color="#5a5d57"/></linearGradient>
    <radialGradient id="cc" cx="485" cy="164" r="7" gradientUnits="userSpaceOnUse"><stop offset="0" stop-color="#c9a080"/><stop offset="0.45" stop-color="#7a3416"/><stop offset="0.8" stop-color="#4a1a08"/><stop offset="1" stop-color="#a89070"/></radialGradient>
  </defs>
  <circle cx="486" cy="166" r="53.5" fill="#161816"/>
  <circle cx="486" cy="166" r="51" fill="url(#cring)"/>
  <circle cx="486" cy="166" r="37" fill="#232622"/>
  <circle cx="486" cy="166" r="34" fill="url(#cin)"/>
  <circle cx="486" cy="166" r="30" fill="none" stroke="#575a54" stroke-width="3" opacity="0.6"/>
  <g fill="#5b6358" stroke="#262b26" stroke-width="0.5">
    <path d="M492 160 L457 137 L480 172 Z"/><path d="M480 160 L515 137 L492 172 Z"/>
    <path d="M480 160 L457 195 L492 172 Z"/><path d="M492 160 L515 195 L480 172 Z"/>
  </g>
  <g fill="#3a423a"><path d="M486 166 L457 137 L480 172 Z"/><path d="M486 166 L515 137 L492 172 Z"/><path d="M486 166 L457 195 L480 160 Z"/><path d="M486 166 L515 195 L492 160 Z"/></g>
  <g fill="#606a5e" stroke="#232823" stroke-width="0.5">
    <path d="M486 102 L491 158 L486 166 L481 158 Z"/>
    <path d="M486 230 L491 174 L486 166 L481 174 Z"/>
    <path d="M424 166 L478 161 L486 166 L478 171 Z"/>
    <path d="M548 166 L494 161 L486 166 L494 171 Z"/>
  </g>
  <g fill="#3b443b"><path d="M486 102 L491 158 L486 166 Z"/><path d="M486 230 L481 174 L486 166 Z"/><path d="M424 166 L478 171 L486 166 Z"/><path d="M548 166 L494 161 L486 166 Z"/></g>
  <circle cx="486" cy="166" r="6.5" fill="url(#cc)"/>
  <text x="486.5" y="131.5" text-anchor="middle" font-family="Liberation Serif" font-weight="bold" font-size="18" fill="#b9a57a" stroke="#3a301a" stroke-width="0.6" paint-order="stroke">N</text>
</svg>
<!-- nav controls -->
<svg class="a" style="left:1396px;top:100px" width="70" height="165" viewBox="1396 100 70 165">
  <defs>
    <radialGradient id="nb" cx="0.5" cy="0.45" r="0.55"><stop offset="0" stop-color="#858b80"/><stop offset="0.7" stop-color="#6c7267"/><stop offset="1" stop-color="#4f544c"/></radialGradient>
  </defs>
  <circle cx="1429" cy="134" r="28" fill="url(#nb)"/>
  <circle cx="1429" cy="134" r="18.8" fill="none" stroke="#3f443c" stroke-width="2"/>
  <circle cx="1429" cy="134" r="17.2" fill="none" stroke="#a4a99c" stroke-width="0.9" opacity="0.75"/>
  <path d="M1412 134.5 H1446 M1429.5 117 V151" stroke="#a4a99c" stroke-width="0.8" opacity="0.7"/>
  <g fill="#3a3f38">
    <path d="M1429 107 L1423 117 L1435 117 Z"/><path d="M1429 161 L1423 151 L1435 151 Z"/>
    <path d="M1402 134 L1412 128 L1412 140 Z"/><path d="M1456 134 L1446 128 L1446 140 Z"/>
  </g>
  <path d="M1429 126 V143 M1420.5 134.5 H1438" stroke="#3a3f38" stroke-width="3"/>
  <g fill="#3a3f38"><path d="M1429 124.5 L1425 128.8 H1433 Z"/><path d="M1429 144.5 L1425 140.2 H1433 Z"/><path d="M1419 134.5 L1423.3 130.5 V138.5 Z"/><path d="M1439.5 134.5 L1435.2 130.5 V138.5 Z"/></g>
  <g fill="url(#nb)">
    <circle cx="1414" cy="183" r="13"/><circle cx="1446" cy="183" r="13"/>
    <circle cx="1414" cy="215" r="13"/><circle cx="1446" cy="215" r="13"/>
    <circle cx="1414" cy="247" r="13"/><circle cx="1446" cy="247" r="13"/>
  </g>
  <g fill="#4a4f47">
    <rect x="1405" y="180.5" width="18" height="5"/>
    <rect x="1437" y="180.5" width="18" height="5"/><rect x="1443.5" y="174" width="5" height="18"/>
  </g>
  <path d="M1419.5 209 A6.5 6.5 0 1 0 1420.5 220" fill="none" stroke="#3f443c" stroke-width="3.6"/>
  <path d="M1419.5 209 A6.5 6.5 0 1 0 1420.5 220" fill="none" stroke="#9aa094" stroke-width="0.9" transform="translate(-0.8,-0.8)" opacity="0.7"/>
  <path d="M1416.5 205.5 L1422.5 205 L1422 212 Z" fill="#3f443c"/>
  <path d="M1440.5 209 A6.5 6.5 0 1 1 1439.5 220" fill="none" stroke="#3f443c" stroke-width="3.6"/>
  <path d="M1440.5 209 A6.5 6.5 0 1 1 1439.5 220" fill="none" stroke="#9aa094" stroke-width="0.9" transform="translate(0.8,-0.8)" opacity="0.7"/>
  <path d="M1443.5 205.5 L1437.5 205 L1438 212 Z" fill="#3f443c"/>
  <path d="M1405 250 L1417 240 L1424 243 L1412 253 Z" fill="#45493f" stroke="#9a9e94" stroke-width="0.8"/>
  <path d="M1440 239 L1452 239 L1456 254 L1436 254 Z" fill="#50554d" stroke="#9ea398" stroke-width="0.8"/>
</svg>
<!-- stars -->
<svg class="a" style="left:402px;top:82px;opacity:0.55" width="1079" height="923" viewBox="402 82 1079 923"><rect x="752" y="223" width="1" height="1" fill="#b0b0b0"/><rect x="1287" y="171" width="1" height="1" fill="#7a7a7a"/><rect x="949" y="118" width="1" height="1" fill="#a07a40"/><rect x="468" y="604" width="1" height="1" fill="#9a8a60"/><rect x="1031" y="141" width="1" height="1" fill="#7a7a7a"/><rect x="1327" y="350" width="1" height="1" fill="#9a8a60"/><rect x="1137" y="179" width="1" height="1" fill="#7a7a7a"/><rect x="625" y="709" width="1" height="1" fill="#a07a40"/><rect x="597" y="801" width="1" height="1" fill="#8a8f9a"/><rect x="969" y="888" width="1" height="1" fill="#b0b0b0"/><rect x="1059" y="151" width="1" height="1" fill="#7a7a7a"/><rect x="1218" y="224" width="1" height="1" fill="#a07a40"/><rect x="1284" y="397" width="1" height="1" fill="#6a7a9a"/><rect x="1307" y="952" width="1" height="1" fill="#a07a40"/><rect x="474" y="756" width="1" height="1" fill="#6a7a9a"/><rect x="1472" y="839" width="1" height="1" fill="#6a7a9a"/><rect x="1358" y="403" width="1" height="1" fill="#a07a40"/><rect x="639" y="348" width="1" height="1" fill="#b0b0b0"/><rect x="824" y="885" width="1" height="1" fill="#8a8f9a"/><rect x="551" y="480" width="1" height="1" fill="#7a7a7a"/><rect x="1355" y="964" width="1" height="1" fill="#9a8a60"/><rect x="567" y="689" width="1" height="1" fill="#8a8f9a"/><rect x="408" y="469" width="1" height="1" fill="#6a7a9a"/><rect x="747" y="199" width="1" height="1" fill="#8a6a50"/><rect x="462" y="911" width="1.5" height="1.5" fill="#8a6a50"/><rect x="609" y="989" width="1" height="1" fill="#a07a40"/><rect x="770" y="132" width="1" height="1" fill="#8a8f9a"/><rect x="1064" y="149" width="1" height="1" fill="#9a8a60"/><rect x="564" y="316" width="1" height="1" fill="#6a7a9a"/><rect x="914" y="190" width="1.5" height="1.5" fill="#a07a40"/><rect x="1295" y="232" width="1" height="1" fill="#8a8f9a"/><rect x="1427" y="416" width="1" height="1" fill="#b0b0b0"/><rect x="433" y="569" width="1.5" height="1.5" fill="#b0b0b0"/><rect x="644" y="830" width="1.5" height="1.5" fill="#8a6a50"/><rect x="1271" y="836" width="1" height="1" fill="#b0b0b0"/><rect x="1190" y="993" width="1" height="1" fill="#8a6a50"/><rect x="1432" y="495" width="1.5" height="1.5" fill="#b0b0b0"/><rect x="1431" y="419" width="1" height="1" fill="#9a8a60"/><rect x="1060" y="86" width="1" height="1" fill="#b0b0b0"/><rect x="1095" y="851" width="1.5" height="1.5" fill="#8a8f9a"/><rect x="1245" y="773" width="1.5" height="1.5" fill="#a07a40"/><rect x="497" y="954" width="1" height="1" fill="#b0b0b0"/><rect x="1183" y="240" width="1" height="1" fill="#9a8a60"/><rect x="993" y="104" width="1.5" height="1.5" fill="#8a6a50"/><rect x="1408" y="483" width="1" height="1" fill="#8a6a50"/><rect x="1343" y="110" width="1" height="1" fill="#9a8a60"/><rect x="545" y="920" width="1.5" height="1.5" fill="#6a7a9a"/><rect x="1348" y="204" width="1" height="1" fill="#9a8a60"/><rect x="424" y="488" width="1" height="1" fill="#9a8a60"/><rect x="1238" y="222" width="1" height="1" fill="#9a8a60"/><rect x="518" y="599" width="1" height="1" fill="#9a8a60"/><rect x="890" y="110" width="1" height="1" fill="#8a8f9a"/><rect x="1156" y="890" width="1.5" height="1.5" fill="#6a7a9a"/><rect x="1364" y="270" width="1" height="1" fill="#a07a40"/><rect x="535" y="490" width="1" height="1" fill="#8a8f9a"/><rect x="729" y="196" width="1" height="1" fill="#8a6a50"/><rect x="558" y="895" width="1" height="1" fill="#a07a40"/><rect x="1428" y="450" width="1" height="1" fill="#a07a40"/><rect x="1163" y="998" width="1" height="1" fill="#a07a40"/><rect x="614" y="377" width="1" height="1" fill="#b0b0b0"/><rect x="1391" y="294" width="1" height="1" fill="#8a8f9a"/><rect x="696" y="917" width="1" height="1" fill="#9a8a60"/><rect x="543" y="472" width="1" height="1" fill="#b0b0b0"/><rect x="682" y="221" width="1" height="1" fill="#7a7a7a"/><rect x="1157" y="166" width="1" height="1" fill="#8a8f9a"/><rect x="601" y="907" width="1.5" height="1.5" fill="#6a7a9a"/><rect x="494" y="871" width="1" height="1" fill="#8a8f9a"/><rect x="535" y="95" width="1" height="1" fill="#7a7a7a"/><rect x="1388" y="655" width="1" height="1" fill="#8a8f9a"/><rect x="660" y="185" width="1" height="1" fill="#9a8a60"/><rect x="599" y="941" width="1" height="1" fill="#b0b0b0"/><rect x="777" y="101" width="1" height="1" fill="#6a7a9a"/><rect x="424" y="549" width="1" height="1" fill="#9a8a60"/><rect x="1359" y="976" width="1" height="1" fill="#6a7a9a"/><rect x="1460" y="399" width="1.5" height="1.5" fill="#8a6a50"/><rect x="1188" y="212" width="1.5" height="1.5" fill="#6a7a9a"/><rect x="1304" y="97" width="1" height="1" fill="#b0b0b0"/><rect x="679" y="234" width="1" height="1" fill="#8a8f9a"/><rect x="1448" y="634" width="1" height="1" fill="#b0b0b0"/><rect x="1438" y="978" width="1" height="1" fill="#7a7a7a"/><rect x="441" y="895" width="1" height="1" fill="#9a8a60"/><rect x="405" y="435" width="1" height="1" fill="#a07a40"/><rect x="1238" y="167" width="1" height="1" fill="#8a6a50"/><rect x="833" y="122" width="1" height="1" fill="#8a8f9a"/><rect x="1081" y="162" width="1.5" height="1.5" fill="#7a7a7a"/><rect x="571" y="904" width="1.5" height="1.5" fill="#8a6a50"/><rect x="451" y="852" width="1" height="1" fill="#7a7a7a"/><rect x="1193" y="830" width="1.5" height="1.5" fill="#9a8a60"/><rect x="1278" y="99" width="1" height="1" fill="#b0b0b0"/><rect x="1364" y="712" width="1" height="1" fill="#b0b0b0"/><rect x="479" y="941" width="1" height="1" fill="#7a7a7a"/><rect x="1314" y="300" width="1" height="1" fill="#8a6a50"/><rect x="1199" y="981" width="1" height="1" fill="#a07a40"/><rect x="486" y="921" width="1" height="1" fill="#6a7a9a"/><rect x="677" y="767" width="1" height="1" fill="#6a7a9a"/><rect x="547" y="527" width="1" height="1" fill="#a07a40"/><rect x="905" y="193" width="1" height="1" fill="#7a7a7a"/><rect x="1455" y="944" width="1" height="1" fill="#8a8f9a"/><rect x="486" y="550" width="1.5" height="1.5" fill="#a07a40"/><rect x="820" y="926" width="1" height="1" fill="#9a8a60"/><rect x="501" y="771" width="1.5" height="1.5" fill="#6a7a9a"/><rect x="547" y="838" width="1" height="1" fill="#7a7a7a"/><rect x="525" y="420" width="1.5" height="1.5" fill="#a07a40"/><rect x="927" y="107" width="1.5" height="1.5" fill="#8a8f9a"/><rect x="808" y="195" width="1" height="1" fill="#6a7a9a"/><rect x="1211" y="855" width="1.5" height="1.5" fill="#8a8f9a"/><rect x="614" y="95" width="1" height="1" fill="#b0b0b0"/><rect x="1478" y="625" width="1.5" height="1.5" fill="#6a7a9a"/><rect x="1216" y="869" width="1" height="1" fill="#6a7a9a"/><rect x="1301" y="346" width="1" height="1" fill="#9a8a60"/><rect x="608" y="427" width="1.5" height="1.5" fill="#a07a40"/><rect x="1277" y="664" width="1" height="1" fill="#7a7a7a"/><rect x="1178" y="129" width="1" height="1" fill="#b0b0b0"/><rect x="1065" y="211" width="1" height="1" fill="#8a6a50"/><rect x="457" y="936" width="1" height="1" fill="#9a8a60"/><rect x="679" y="763" width="1" height="1" fill="#b0b0b0"/><rect x="584" y="233" width="1" height="1" fill="#9a8a60"/><rect x="592" y="595" width="1" height="1" fill="#6a7a9a"/><rect x="1358" y="773" width="1" height="1" fill="#a07a40"/><rect x="1206" y="277" width="1" height="1" fill="#6a7a9a"/><rect x="471" y="339" width="1" height="1" fill="#6a7a9a"/><rect x="1332" y="282" width="1.5" height="1.5" fill="#6a7a9a"/><rect x="1279" y="974" width="1" height="1" fill="#9a8a60"/><rect x="1167" y="907" width="1.5" height="1.5" fill="#a07a40"/><rect x="931" y="151" width="1" height="1" fill="#8a6a50"/><rect x="1246" y="290" width="1" height="1" fill="#9a8a60"/><rect x="1137" y="949" width="1" height="1" fill="#b0b0b0"/><rect x="1314" y="906" width="1" height="1" fill="#8a8f9a"/><rect x="447" y="803" width="1" height="1" fill="#9a8a60"/><rect x="444" y="741" width="1" height="1" fill="#9a8a60"/><rect x="1225" y="175" width="1" height="1" fill="#6a7a9a"/><rect x="415" y="361" width="1" height="1" fill="#a07a40"/><rect x="744" y="855" width="1" height="1" fill="#9a8a60"/><rect x="656" y="311" width="1" height="1" fill="#a07a40"/><rect x="734" y="104" width="1.5" height="1.5" fill="#a07a40"/><rect x="1100" y="159" width="1" height="1" fill="#9a8a60"/><rect x="1399" y="292" width="1" height="1" fill="#8a8f9a"/><rect x="830" y="90" width="1" height="1" fill="#6a7a9a"/><rect x="1447" y="370" width="1" height="1" fill="#8a6a50"/><rect x="1360" y="184" width="1" height="1" fill="#7a7a7a"/><rect x="605" y="289" width="1.5" height="1.5" fill="#a07a40"/><rect x="465" y="631" width="1" height="1" fill="#a07a40"/><rect x="429" y="632" width="1" height="1" fill="#a07a40"/><rect x="469" y="445" width="1.5" height="1.5" fill="#b0b0b0"/><rect x="1192" y="1001" width="1" height="1" fill="#9a8a60"/><rect x="603" y="944" width="1" height="1" fill="#b0b0b0"/><rect x="1306" y="989" width="1" height="1" fill="#a07a40"/><rect x="407" y="341" width="1" height="1" fill="#6a7a9a"/><rect x="1356" y="600" width="1" height="1" fill="#8a6a50"/><rect x="1288" y="481" width="1" height="1" fill="#8a8f9a"/><rect x="1268" y="141" width="1" height="1" fill="#9a8a60"/><rect x="1370" y="396" width="1" height="1" fill="#6a7a9a"/><rect x="1398" y="357" width="1" height="1" fill="#b0b0b0"/><rect x="1389" y="667" width="1" height="1" fill="#8a8f9a"/><rect x="1433" y="961" width="1" height="1" fill="#a07a40"/><rect x="1386" y="833" width="1.5" height="1.5" fill="#9a8a60"/><rect x="601" y="822" width="1" height="1" fill="#b0b0b0"/><rect x="1148" y="223" width="1" height="1" fill="#9a8a60"/><rect x="1245" y="157" width="1" height="1" fill="#9a8a60"/><rect x="576" y="459" width="1" height="1" fill="#b0b0b0"/><rect x="1458" y="896" width="1" height="1" fill="#8a8f9a"/><rect x="1315" y="695" width="1" height="1" fill="#8a8f9a"/><rect x="604" y="300" width="1.5" height="1.5" fill="#6a7a9a"/><rect x="830" y="996" width="1" height="1" fill="#7a7a7a"/><rect x="1102" y="176" width="1.5" height="1.5" fill="#a07a40"/><rect x="514" y="520" width="1" height="1" fill="#8a6a50"/><rect x="1347" y="298" width="1" height="1" fill="#8a8f9a"/><rect x="1450" y="620" width="1" height="1" fill="#8a8f9a"/><rect x="1335" y="497" width="1" height="1" fill="#6a7a9a"/><rect x="1119" y="90" width="1" height="1" fill="#b0b0b0"/></svg>
<!-- popup -->
<div class="a" style="left:763px;top:930px;width:367px;height:57px;border:2px solid #a8a8a8;border-radius:9px;background:#000;overflow:hidden">
  <div class="a" style="left:0;top:0;width:363px;height:14px;background:#808080"></div>
</div>
<svg class="a" style="left:764px;top:932px" width="24" height="12" viewBox="0 0 24 12"><circle cx="6" cy="6" r="4.8" fill="#a4a4a4"/><path d="M3.6 3.6 L8.4 8.4 M8.4 3.6 L3.6 8.4" stroke="#555" stroke-width="0.9"/><circle cx="17.5" cy="6" r="4.4" fill="#f0f0f0"/><rect x="14" y="5.2" width="7" height="1.6" fill="#777"/></svg>
<div class="a" style="left:763px;top:932.5px;width:367px;text-align:center;font-size:12px;line-height:14px;color:#333;white-space:nowrap">Theory of Plate Tectonics</div>
<div class="a" style="left:763px;top:950px;width:367px;text-align:center;font-size:12px;line-height:16px;color:#dcdcdc;white-space:nowrap;letter-spacing:0.05px">The upper surface of the Earth is broken up into a number of large<br>chunks of rigid material, or plates, that are constantly in motion.</div>
<!-- altitude -->
<div class="a" style="left:403.5px;top:991px;font-size:12px;line-height:14px;font-weight:bold;color:#fff;white-space:nowrap">Altitude 19,065 km</div>
<div class="a" style="left:527px;top:991px;font-size:12px;line-height:14px;font-weight:bold;color:#fff;white-space:nowrap;letter-spacing:-0.25px">Off Globe</div>
<!-- bottom tabs -->
<div class="a" style="left:64px;top:983px;width:1px;height:22px;background:#cbcbcb"></div>
<div class="a" style="left:124px;top:983px;width:1px;height:22px;background:#cbcbcb"></div>
<div class="a" style="left:183.5px;top:983px;width:1px;height:22px;background:#cbcbcb"></div>
<div class="a" style="left:253.5px;top:983px;width:1px;height:22px;background:#cbcbcb"></div>
<svg class="a" style="left:6px;top:986px" width="250" height="16" viewBox="6 986 250 16">
  <circle cx="12.5" cy="992.5" r="3.2" fill="none" stroke="#222" stroke-width="1.6"/><path d="M14.8 994.8 L18 998" stroke="#222" stroke-width="2"/>
  <circle cx="71" cy="997" r="1.3" fill="#222"/><path d="M70 992.5 A5 5 0 0 1 75.5 998 M70 989 A8.5 8.5 0 0 1 79 998" fill="none" stroke="#222" stroke-width="1.5"/>
  <path d="M130.5 989 V999" stroke="#222" stroke-width="1.4"/><path d="M131 989 L139 992 L131 995 Z" fill="#222"/>
  <rect x="189" y="989" width="6" height="6" fill="#222"/><circle cx="195.5" cy="995" r="4" fill="#222"/>
</svg>
<div class="a" style="left:23px;top:988.5px;font-size:11px;line-height:13px;color:#111;white-space:nowrap">Search</div>
<div class="a" style="left:84px;top:988.5px;font-size:11px;line-height:13px;color:#111;white-space:nowrap">Layers</div>
<div class="a" style="left:144px;top:988.5px;font-size:11px;line-height:13px;color:#111;white-space:nowrap">Labels</div>
<div class="a" style="left:203px;top:988.5px;font-size:11px;line-height:13px;color:#111;white-space:nowrap;letter-spacing:0.25px">Symbols</div>
<div class="a" style="left:389px;top:989px;width:1.3px;height:10px;background:#666"></div>
<div class="a" style="left:392px;top:989px;width:1.3px;height:10px;background:#666"></div>
<div class="a" style="left:395px;top:989px;width:1.3px;height:10px;background:#666"></div>
<!--/OVERLAY-->


</body></html>
